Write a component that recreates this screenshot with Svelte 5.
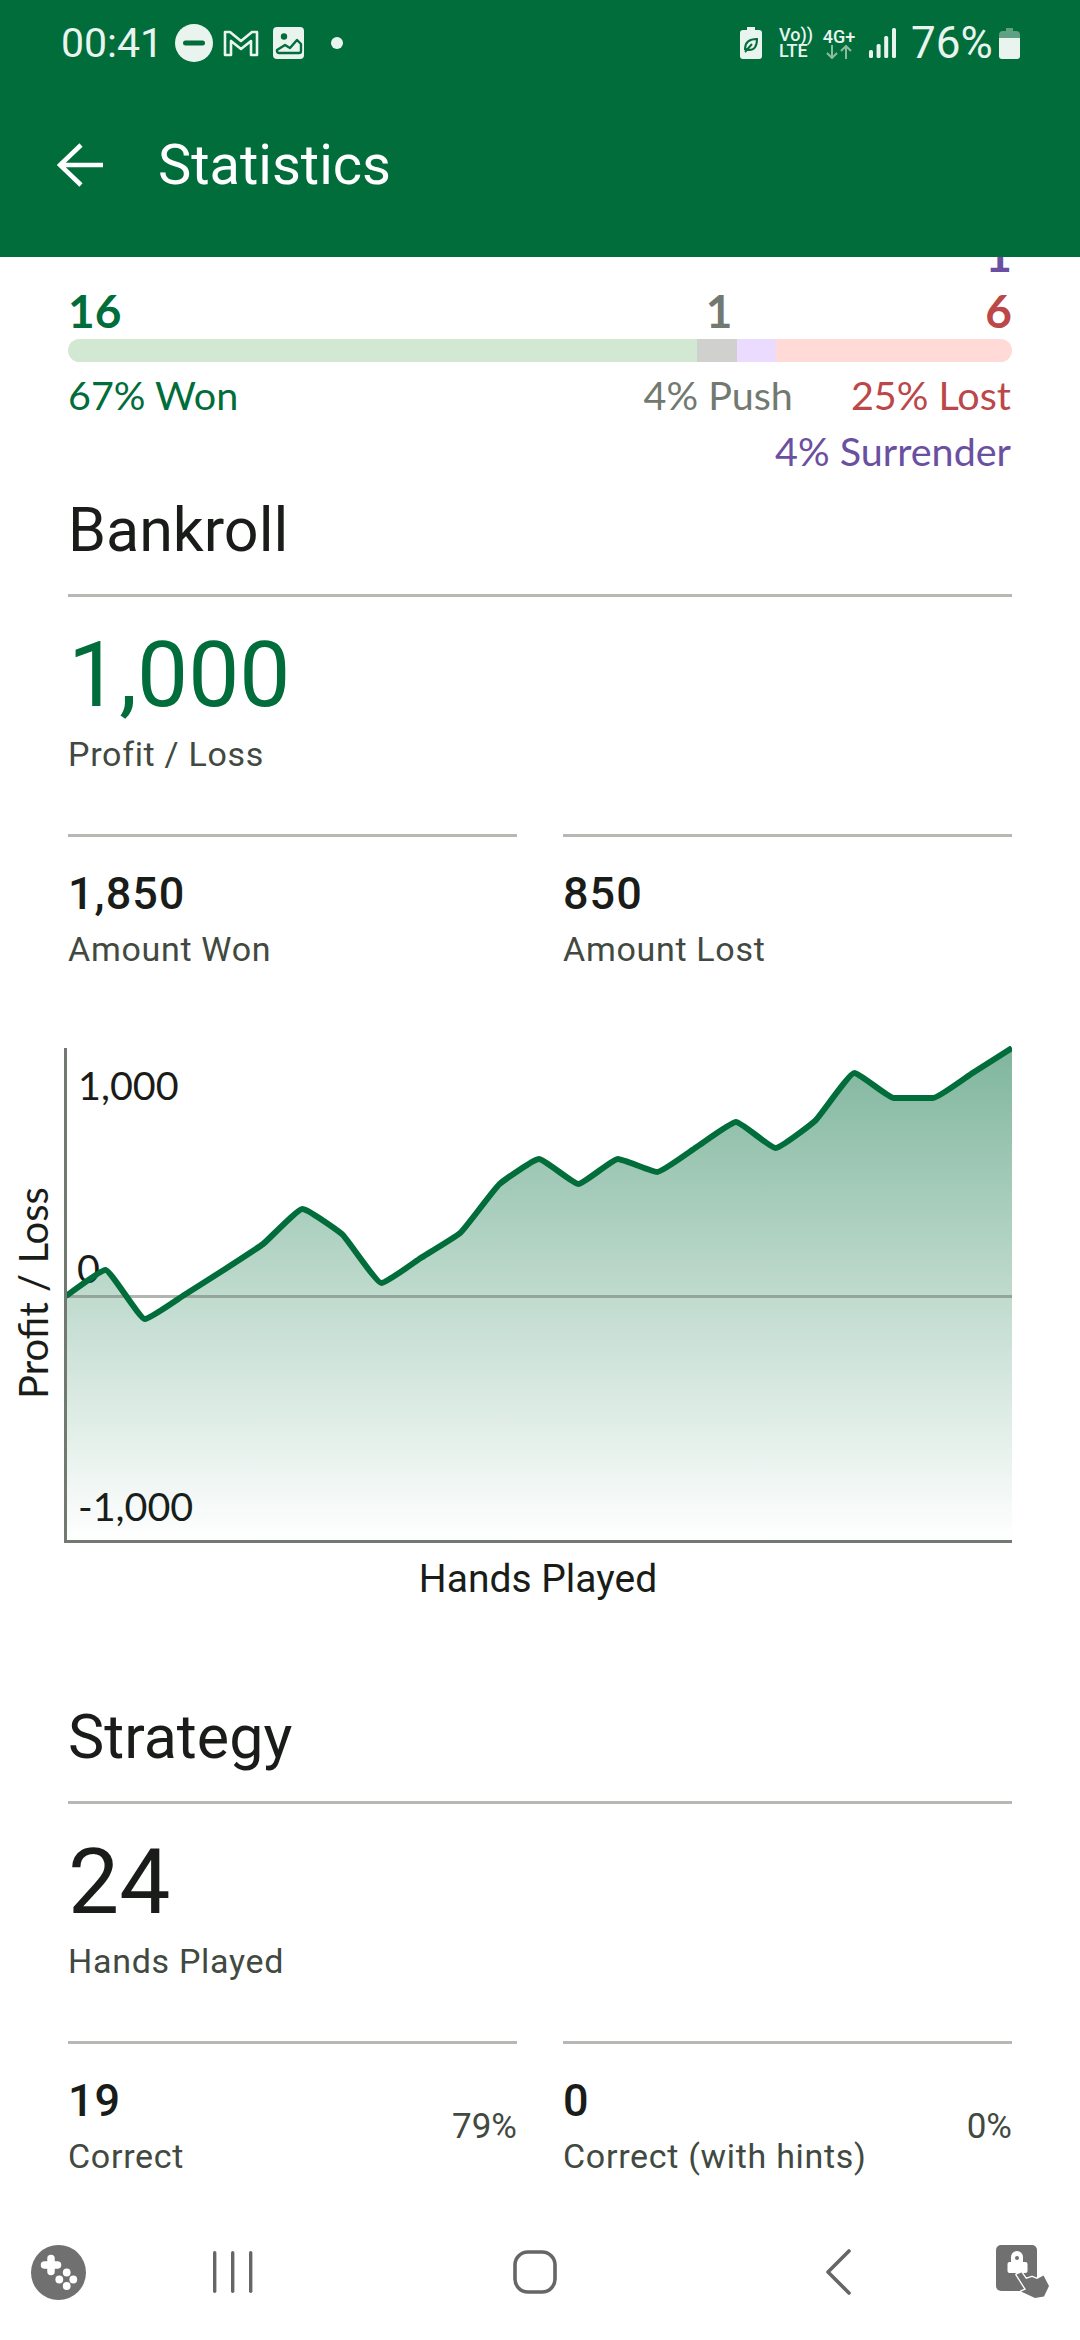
<script lang="ts">
	const ys = [1295, 1269, 1318, 1294, 1269, 1243, 1208, 1233, 1282, 1257, 1232, 1183, 1158, 1183, 1158, 1171, 1146, 1121, 1147, 1120, 1072, 1097, 1097, 1072, 1047];
	const top = 1045;
	const step = 946 / 24;
	const points = ys.map((y, i) => [2 + i * step, y - top]);

	// small-handle monotone curve, corners stay close to the data
	function linePath(pts: number[][]) {
		const slopes = pts.slice(1).map((p, i) => (p[1] - pts[i][1]) / (p[0] - pts[i][0]));
		const tangent = pts.map((_, i) => {
			if (i === 0) return slopes[0];
			if (i === pts.length - 1) return slopes[i - 1];
			const a = slopes[i - 1];
			const b = slopes[i];
			return a * b <= 0 ? 0 : (2 * a * b) / (a + b);
		});
		let d = `M${pts[0][0]} ${pts[0][1]}`;
		for (let i = 1; i < pts.length; i++) {
			const h = step / 8;
			d += `C${pts[i - 1][0] + h} ${pts[i - 1][1] + tangent[i - 1] * h} ${pts[i][0] - h} ${pts[i][1] - tangent[i] * h} ${pts[i][0]} ${pts[i][1]}`;
		}
		return d;
	}

	const line = linePath(points);
	const area = `${line}L948 496L2 496Z`;

	const segments = [
		{ name: 'won', hands: 16 },
		{ name: 'push', hands: 1 },
		{ name: 'surrender', hands: 1 },
		{ name: 'lost', hands: 6 }
	];
</script>

<div class="screen">
	<header class="top">
		<div class="status">
			<span class="time">00:41</span>
			<svg class="dnd" viewBox="0 0 38 38"><circle cx="19" cy="19" r="19" fill="#eaf4ee" /><rect x="8" y="16.5" width="22" height="5" rx="2.5" fill="#006d3b" /></svg>
			<svg class="gmail" viewBox="0 0 36 28" fill="none" stroke="#eaf4ee" stroke-width="2.6" stroke-linejoin="round"><path d="M2 3h5l11 9L29 3h5v23h-6V12l-10 8-10-8v14H2z" /></svg>
			<svg class="photo" viewBox="0 0 31 32"><rect width="31" height="32" rx="4" fill="#eaf4ee" /><circle cx="11" cy="9.5" r="3.2" fill="#006d3b" /><path d="M4 23l8-5 5 3 7-8 4 4v7a2 2 0 0 1-2 2H6a2 2 0 0 1-2-2z" fill="none" stroke="#006d3b" stroke-width="2.4" stroke-linejoin="round" /></svg>
			<span class="dot"></span>
			<span class="spacer"></span>
			<svg class="eco" viewBox="0 0 22 32"><path d="M7 0h8v3h4a3 3 0 0 1 3 3v23a3 3 0 0 1-3 3H3a3 3 0 0 1-3-3V6a3 3 0 0 1 3-3h4z" fill="#eaf4ee" /><path d="M5 22c0-7 5-10 12-10 0 7-3 11-8 11-1 0-2-.3-3-1zM5 25l7-8" fill="none" stroke="#006d3b" stroke-width="2" /></svg>
			<span class="volte"><span>Vo))</span><span>LTE</span></span>
			<span class="net">
				<span>4G+</span>
				<svg viewBox="0 0 26 14" fill="none" stroke="#8dbba1" stroke-width="2"><path d="M6 0v13M1 8l5 5 5-5M20 14V1M15 6l5-5 5 5" /></svg>
			</span>
			<svg class="signal" viewBox="0 0 27 30" fill="#eaf4ee"><rect y="22" width="4" height="8" rx="1.5" /><rect x="7.6" y="16" width="4" height="14" rx="1.5" /><rect x="15.2" y="8" width="4" height="22" rx="1.5" /><rect x="23" width="4" height="30" rx="1.5" /></svg>
			<span class="level">76%</span>
			<svg class="battery" viewBox="0 0 21 31"><path d="M7 0h7v3h3a4 4 0 0 1 4 4v4H0V7a4 4 0 0 1 4-4h3z" fill="#5fa183" /><path d="M0 10h21v18a3 3 0 0 1-3 3H3a3 3 0 0 1-3-3z" fill="#eaf4ee" /></svg>
		</div>
		<div class="appbar">
			<svg class="back" viewBox="0 0 46 44" fill="none" stroke="#fff" stroke-width="4.6"><path d="M46 22H4M24 2L3 22l21 20" /></svg>
			<h1>Statistics</h1>
		</div>
	</header>

	<main class="content">
		<section class="block results">
			<div class="clipped">1</div>
			<div class="counts">
				<span class="won">16</span>
				<span class="push-count push">1</span>
				<span class="lost">6</span>
			</div>
			<div class="bar">
				{#each segments as seg}
					<span class="seg {seg.name}" style="flex-grow: {seg.hands}"></span>
				{/each}
			</div>
			<div class="pcts">
				<span class="won">67% Won</span>
				<div class="pcts-right">
					<span class="push">4% Push</span>
					<span class="lost">25% Lost</span>
					<span class="surrender">4% Surrender</span>
				</div>
			</div>
		</section>

		<section class="block">
			<h2>Bankroll</h2>
			<div class="hero">
				<div class="hero-value won-value">1,000</div>
				<div class="label">Profit / Loss</div>
			</div>
			<div class="pair">
				<div class="stat">
					<div class="value">1,850</div>
					<div class="label">Amount Won</div>
				</div>
				<div class="stat">
					<div class="value">850</div>
					<div class="label">Amount Lost</div>
				</div>
			</div>
		</section>

		<section class="chart-wrap">
			<div class="y-title">Profit / Loss</div>
			<div class="chart">
				<svg viewBox="0 0 948 498" width="948" height="498">
					<defs>
						<linearGradient id="fade" x1="0" y1="0" x2="0" y2="1">
							<stop offset="0" stop-color="#006d3b" stop-opacity="0.5" />
							<stop offset="1" stop-color="#006d3b" stop-opacity="0" />
						</linearGradient>
					</defs>
					<text x="14" y="54" class="tick">1,000</text>
					<text x="13" y="237" class="tick">0</text>
					<text x="14" y="475" class="tick">-1,000</text>
					<path d={area} fill="url(#fade)" />
					<rect x="2" y="249" width="946" height="3" fill="#727970" opacity="0.55" />
					<path d={line} fill="none" stroke="#006d3b" stroke-width="6" stroke-linejoin="round" />
					<rect x="0" y="2" width="3" height="495" fill="#727970" />
					<rect x="2" y="494" width="946" height="3" fill="#727970" />
				</svg>
				<div class="x-title">Hands Played</div>
			</div>
		</section>

		<section class="block strategy">
			<h2>Strategy</h2>
			<div class="hero">
				<div class="hero-value">24</div>
				<div class="label">Hands Played</div>
			</div>
			<div class="pair">
				<div class="stat with-pct">
					<div>
						<div class="value">19</div>
						<div class="label">Correct</div>
					</div>
					<span class="pct">79%</span>
				</div>
				<div class="stat with-pct">
					<div>
						<div class="value">0</div>
						<div class="label">Correct (with hints)</div>
					</div>
					<span class="pct">0%</span>
				</div>
			</div>
		</section>
	</main>

	<nav class="navbar">
		<svg class="game" viewBox="0 0 55 55">
			<circle cx="27.5" cy="27.5" r="27.5" fill="#707070" />
			<path d="M20 13.5v13M13.5 20h13" stroke="#fff" stroke-width="7.5" stroke-linecap="round" fill="none" />
			<circle cx="35.7" cy="27.5" r="3.9" fill="#fff" /><circle cx="28.3" cy="34.5" r="3.9" fill="#fff" /><circle cx="42.3" cy="34.5" r="3.9" fill="#fff" /><circle cx="35.7" cy="41" r="3.9" fill="#fff" />
		</svg>
		<svg class="recents" viewBox="0 0 42 44" fill="#666"><rect x="0" y="1" width="3.4" height="42" rx="1.7" /><rect x="18" y="1" width="3.4" height="42" rx="1.7" /><rect x="36" y="1" width="3.4" height="42" rx="1.7" /></svg>
		<svg class="home" viewBox="0 0 44 44" fill="none" stroke="#666" stroke-width="3.6"><rect x="2" y="2" width="40" height="40" rx="13" /></svg>
		<svg class="nav-back" viewBox="0 0 26 46" fill="none" stroke="#666" stroke-width="3.6" stroke-linecap="round" stroke-linejoin="round"><path d="M24 2L3 23l21 21" /></svg>
		<svg class="assist" viewBox="0 0 54 54">
			<rect x="0" y="0" width="41" height="46" rx="5" fill="#707070" />
			<rect x="11.5" y="17" width="20" height="11" rx="2" fill="#fff" />
			<path d="M15 18v-6a6 6 0 0 1 12 0v6" fill="#fff" />
			<circle cx="21" cy="13" r="2" fill="#707070" />
			<path d="M20.5 29.5L25.5 27.5L30 34L36 32L41 34L47.5 30.5L53 41L48 51.5L39 53L25 46.5L30 44.5Z" fill="#707070" stroke="#fff" stroke-width="2.6" stroke-linejoin="round" paint-order="stroke" />
		</svg>
	</nav>
</div>

<style>
	:global(body) {
		margin: 0;
		background: #fff;
	}

	.screen {
		width: 1080px;
		height: 2340px;
		display: flex;
		flex-direction: column;
		overflow: hidden;
		background: #fff;
		color: #191c19;
		font-family: Roboto, sans-serif;
	}

	.top {
		height: 257px;
		flex-shrink: 0;
		background: #006d3b;
		color: #fff;
	}

	.status {
		display: flex;
		align-items: center;
		height: 86px;
		padding: 0 61px;
		color: #eaf4ee;
		font-size: 41px;
	}

	.time {
		width: 114px;
	}

	.dnd {
		width: 38px;
		height: 38px;
	}

	.gmail {
		width: 36px;
		height: 28px;
		margin-left: 10px;
	}

	.photo {
		width: 31px;
		height: 32px;
		margin-left: 14px;
	}

	.dot {
		width: 12px;
		height: 12px;
		border-radius: 50%;
		background: #eaf4ee;
		margin-left: 27px;
	}

	.spacer {
		flex: 1;
	}

	.eco {
		width: 22px;
		height: 32px;
	}

	.volte {
		display: flex;
		flex-direction: column;
		margin-left: 17px;
		font-size: 18px;
		font-weight: 500;
		line-height: 16px;
		width: 32px;
	}

	.net {
		display: flex;
		flex-direction: column;
		align-items: center;
		margin-left: 11px;
		width: 34px;
		font-size: 18px;
		font-weight: 500;
		line-height: 17px;
	}

	.net svg {
		width: 26px;
		height: 14px;
	}

	.signal {
		width: 27px;
		height: 30px;
		margin-left: 13px;
	}

	.level {
		margin-left: 15px;
		width: 81px;
		font-size: 44px;
	}

	.battery {
		width: 21px;
		height: 31px;
		margin-left: 7px;
		margin-right: -1px;
	}

	.appbar {
		display: flex;
		align-items: center;
		height: 158px;
		padding-left: 57px;
	}

	.back {
		width: 46px;
		height: 44px;
	}

	h1 {
		margin: 0 0 0 55px;
		font-size: 56px;
		font-weight: 400;
	}

	.content {
		flex: 1;
		min-height: 0;
		overflow: hidden;
	}

	.block {
		padding: 0 68px;
	}

	.results {
		font-family: Lato, sans-serif;
	}

	.clipped {
		margin-top: -26px;
		text-align: right;
		color: #6b4fa0;
		font-size: 46px;
		font-weight: 700;
		line-height: 48px;
	}

	.counts {
		display: flex;
		font-size: 46px;
		font-weight: 700;
		line-height: 48px;
		margin-top: 8px;
	}

	.push-count {
		margin-left: auto;
		margin-right: 253px;
	}

	.bar {
		display: flex;
		height: 23px;
		margin-top: 4px;
		border-radius: 12px;
		overflow: hidden;
	}

	.seg {
		flex-basis: 0;
	}

	.seg.won {
		background: #d3e8d3;
	}

	.seg.push {
		background: #d0d1ce;
	}

	.seg.surrender {
		background: #ebdcff;
	}

	.seg.lost {
		background: #ffdad6;
	}

	.pcts {
		display: flex;
		justify-content: space-between;
		align-items: flex-start;
		font-size: 39.5px;
		line-height: 56px;
		margin-top: 5px;
		padding: 0 1px 0 0;
	}

	.pcts-right {
		display: flex;
		flex-wrap: wrap;
		justify-content: flex-end;
		column-gap: 58px;
		width: 400px;
	}

	.won {
		color: #006d3b;
	}

	.push {
		color: #727970;
	}

	.lost {
		color: #bc4749;
	}

	.surrender {
		color: #6b4fa0;
	}

	h2 {
		margin: 0;
		padding: 16px 0 29px;
		border-bottom: 3px solid #b5b8b3;
		font-size: 61px;
		font-weight: 400;
		line-height: 70px;
	}

	.hero {
		padding: 28px 0 0;
		height: 237px;
		box-sizing: border-box;
	}

	.hero-value {
		font-size: 91px;
		line-height: 100px;
		margin-bottom: 7px;
	}

	.won-value {
		color: #006d3b;
	}

	.label {
		font-size: 34px;
		line-height: 44px;
		color: #414941;
		letter-spacing: 0.7px;
	}

	.pair {
		display: grid;
		grid-template-columns: 449px 449px;
		gap: 46px;
	}

	.stat {
		border-top: 3px solid #b5b8b3;
		padding: 32px 0 0;
	}

	.value {
		font-size: 45px;
		font-weight: 500;
		line-height: 50px;
		letter-spacing: 1px;
		margin-bottom: 8px;
	}

	.with-pct {
		display: flex;
		justify-content: space-between;
	}

	.pct {
		margin-top: 31px;
		font-size: 35px;
		line-height: 40px;
		color: #414941;
	}

	.chart-wrap {
		display: flex;
		margin-top: 75px;
		padding: 0 0 0 14px;
	}

	.y-title {
		width: 38px;
		height: 494px;
		display: flex;
		align-items: center;
		justify-content: center;
		writing-mode: vertical-rl;
		transform: rotate(180deg);
		font-family: Lato, sans-serif;
		font-size: 40px;
		margin-right: 12px;
	}

	.chart svg {
		display: block;
	}

	.tick {
		font-family: Lato, sans-serif;
		font-size: 39.5px;
		fill: #191c19;
	}

	.x-title {
		text-align: center;
		font-size: 39px;
		line-height: 44px;
		margin-top: 13px;
	}

	.strategy {
		margin-top: 85px;
	}

	.navbar {
		height: 150px;
		flex-shrink: 0;
		box-sizing: border-box;
		display: flex;
		align-items: center;
		background: #fff;
		padding: 14px 0 0 31px;
	}

	.game {
		width: 55px;
		height: 55px;
	}

	.recents {
		width: 42px;
		height: 44px;
		margin-left: 127px;
	}

	.home {
		width: 44px;
		height: 44px;
		margin-left: 258px;
	}

	.nav-back {
		width: 26px;
		height: 46px;
		margin-left: 268px;
	}

	.assist {
		width: 54px;
		height: 54px;
		margin-left: 145px;
	}
</style>
